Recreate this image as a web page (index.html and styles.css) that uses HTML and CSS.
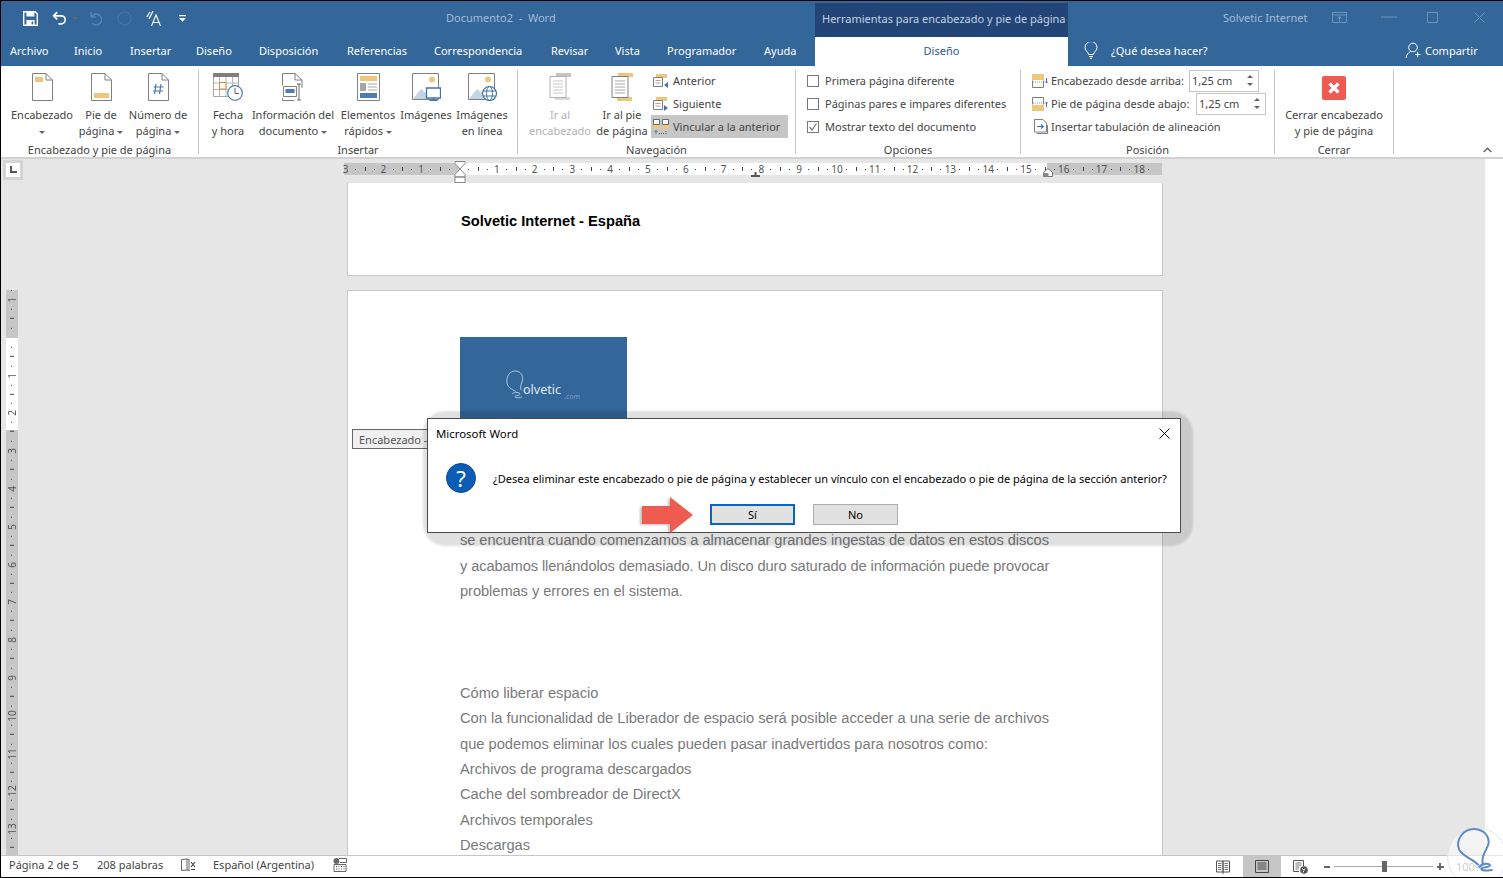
FILE: index.html
```html
<!DOCTYPE html>
<html lang="es">
<head>
  <meta charset="UTF-8" />
  <meta name="viewport" content="width=device-width, initial-scale=1.0"/>
  <title>Documento2 - Word</title>
  <link rel="stylesheet" href="styles.css">
</head>
<body>

<div class="app">

  <!-- title bar -->
  <header class="titlebar">
    <div class="qat">
      <svg class="qat-save" width="15" height="15" viewBox="0 0 15 15"><path d="M.7.7h11.4l2.2 2.2v11.4H.7z" fill="none" stroke="#fff" stroke-width="1.4"/><path d="M3.4 1h8v4.4h-8zM3.4 9h8.2v5.4H3.4z" fill="#fff"/><path d="M8.6 10.4h1.6v3H8.6z" fill="#336699"/></svg>
      <svg class="qat-undo" width="15" height="15" viewBox="0 0 15 15"><path d="M5.2 1.2 1.6 4.8l3.6 3.6M2 4.8h7.2a4 4 0 0 1 0 8H6.4" fill="none" stroke="#fff" stroke-width="1.7"/></svg>
      <span class="caret qat-caret"></span>
      <svg class="qat-redo" width="15" height="15" viewBox="0 0 15 15"><path d="M3.2 1v5h5M3.6 5.8a5.4 5.4 0 1 1 .6 6.4" fill="none" stroke="#5a84b0" stroke-width="1.5"/></svg>
      <svg class="qat-round" width="15" height="15" viewBox="0 0 15 15"><circle cx="7.5" cy="7.5" r="6.6" fill="none" stroke="#4d7aa8" stroke-width="1"/></svg>
      <svg class="qat-touch" width="16" height="17" viewBox="0 0 16 17"><path d="M4 2 .8 7M7 1 3 9" stroke="#fff" stroke-width="1.3"/><path d="M5.5 16 10 5l4.500 11M7.300 12.500h5.400" fill="none" stroke="#fff" stroke-width="1.1"/></svg>
      <svg class="qat-more" width="7" height="7" viewBox="0 0 7 7"><path d="M0 0h7v1.200H0zM0 3h7L3.500 6.800z" fill="#fff"/></svg>
    </div>
    <div class="doc-title">Documento2 &nbsp;-&nbsp; Word</div>
    <div class="ctx-title">Herramientas para encabezado y pie de página</div>
    <div class="account">Solvetic Internet</div>
    <svg class="win-display" width="15" height="11" viewBox="0 0 15 11"><path d="M.5.500h14v10H.5zM.5 3h14M7.500 9.500V4.500M5.500 6.500l2-2 2 2" fill="none" stroke="#6f94ba"/></svg>
    <svg class="win-min" width="16" height="2" viewBox="0 0 16 2"><path d="M0 1h16" stroke="#6f94ba"/></svg>
    <svg class="win-max" width="11" height="11" viewBox="0 0 11 11"><path d="M.5.500h10v10H.5z" fill="none" stroke="#6f94ba"/></svg>
    <svg class="win-close" width="11" height="11" viewBox="0 0 11 11"><path d="M.5.500l10 10M10.500.500l-10 10" stroke="#6f94ba"/></svg>
  </header>

  <!-- tabs -->
  <nav class="tabs">
    <a>Archivo</a>
    <a>Inicio</a>
    <a>Insertar</a>
    <a>Diseño</a>
    <a>Disposición</a>
    <a>Referencias</a>
    <a>Correspondencia</a>
    <a>Revisar</a>
    <a>Vista</a>
    <a>Programador</a>
    <a>Ayuda</a>
    <a class="tab-active">Diseño</a>
    <div class="tell-me">
      <svg width="14" height="17" viewBox="0 0 14 17"><path d="M4.500 12.500C4.500 10 1 9 1 5.500a6 6 0 0 1 12 0c0 3.500-3.500 4.500-3.500 7zM5 14.500h4M6 16.300h2" fill="none" stroke="#fff"/></svg>
      <span>¿Qué desea hacer?</span>
    </div>
    <div class="share">
      <svg width="16" height="17" viewBox="0 0 16 17"><circle cx="8" cy="5.500" r="4.300" fill="none" stroke="#fff"/><path d="M1 16c.5-3.500 2.500-5.500 4.500-6.500M10 12.500h5.500M12.700 9.800v5.400" fill="none" stroke="#fff"/></svg>
      <span>Compartir</span>
    </div>
  </nav>

  <!-- ribbon -->
  <section class="ribbon">

    <div class="group g-header">
      <div class="group-body">
        <div class="big w74">
          <div class="big-icon"><svg width="21" height="28" viewBox="0 0 21 28"><path d="M.5.500H14L20.500 7v20.500H.5z" fill="#fff" stroke="#808080"/><path d="M14 .5V7h6.500" fill="none" stroke="#808080"/><path d="M3 4h8v5H3z" fill="#edc77e"/></svg></div>
          <span>Encabezado<br><i class="caret"></i></span>
        </div>
        <div class="big w44">
          <div class="big-icon"><svg width="21" height="28" viewBox="0 0 21 28"><path d="M.5.500H14L20.500 7v20.500H.5z" fill="#fff" stroke="#808080"/><path d="M14 .5V7h6.500" fill="none" stroke="#808080"/><path d="M3 20h15v5H3z" fill="#edc77e"/></svg></div>
          <span>Pie de<br>página <i class="caret"></i></span>
        </div>
        <div class="big w70">
          <div class="big-icon"><svg width="21" height="28" viewBox="0 0 21 28"><path d="M.5.500H14L20.500 7v20.500H.5z" fill="#fff" stroke="#808080"/><path d="M14 .5V7h6.500" fill="none" stroke="#808080"/><path d="M8 11 6.500 21M13 11l-1.500 10M5.500 14h10M5 18h10" fill="none" stroke="#4a76b4" stroke-width="1.200"/></svg></div>
          <span>Número de<br>página <i class="caret"></i></span>
        </div>
      </div>
      <div class="group-label">Encabezado y pie de página</div>
    </div>

    <div class="group g-insert">
      <div class="group-body">
        <div class="big w38">
          <div class="big-icon"><svg width="30" height="28" viewBox="0 0 30 28"><path d="M.5.500h25v23H.5z" fill="#fff" stroke="#a6a6a6"/><path d="M0 0h26v4H0z" fill="#7f7f7f"/><path d="M6.500 4v19M13 4v19M19.500 4v19M1 10h24M1 16.500h24" stroke="#b5b5b5"/><path d="M6.500 9.500h6.500v6.500H6.500z" fill="#fff" stroke="#d08a3c"/><circle cx="22" cy="20" r="7.300" fill="#fff" stroke="#4a7ebb" stroke-width="1.200"/><path d="M22 15v5.500h4" fill="none" stroke="#666"/></svg></div>
          <span>Fecha<br>y hora</span>
        </div>
        <div class="big w92">
          <div class="big-icon"><svg width="22" height="28" viewBox="0 0 22 28"><path d="M.5.500H13L20 7v8M.5.500v12M.5 25v2.500H12" fill="none" stroke="#808080"/><path d="M13 .5V7h7" fill="none" stroke="#808080"/><path d="M1.500 13.500h13v10h-13z" fill="#fff" stroke="#808080"/><path d="M3.500 16h9v4h-9z" fill="#4f7ab5"/><path d="M15 11h4M17 11v16M15 27h4" fill="none" stroke="#666"/></svg></div>
          <span>Información del<br>documento <i class="caret"></i></span>
        </div>
        <div class="big w58">
          <div class="big-icon"><svg width="23" height="28" viewBox="0 0 23 28"><path d="M.5.500h22v27H.5z" fill="#fff" stroke="#808080"/><path d="M3 3h17v5H3z" fill="#edc77e"/><path d="M3 10h6v8H3z" fill="#a6a6a6"/><path d="M11 11h9M11 14h9M11 17h9" stroke="#a6a6a6"/><path d="M3 20h17v5H3z" fill="#4f7ab5"/></svg></div>
          <span>Elementos<br>rápidos <i class="caret"></i></span>
        </div>
        <div class="big w58">
          <div class="big-icon"><svg width="29" height="28" viewBox="0 0 29 28"><path d="M.5.500h26v26H.5z" fill="#fff" stroke="#808080"/><circle cx="20" cy="6.500" r="3" fill="#edc77e"/><path d="M1 26l8-10 5 4 3-2v8z" fill="#c3d3e8"/><path d="M14.500 15h14v10h-14z" fill="#fff" stroke="#3f73b0" stroke-width="1.300"/><path d="M21.500 25v2.500M17.500 27.500h8" stroke="#3f73b0" stroke-width="1.300"/></svg></div>
          <span>Imágenes<br>&nbsp;</span>
        </div>
        <div class="big w54">
          <div class="big-icon"><svg width="29" height="28" viewBox="0 0 29 28"><path d="M.5.500h26v26H.5z" fill="#fff" stroke="#808080"/><circle cx="20" cy="6.500" r="3" fill="#edc77e"/><path d="M1 26l8-10 5 4 3-2v8z" fill="#c3d3e8"/><circle cx="21.500" cy="20.500" r="7" fill="#fff" stroke="#3f73b0" stroke-width="1.200"/><ellipse cx="21.500" cy="20.500" rx="3" ry="7" fill="none" stroke="#3f73b0"/><path d="M15 18h13M15 23h13" stroke="#3f73b0"/></svg></div>
          <span>Imágenes<br>en línea</span>
        </div>
      </div>
      <div class="group-label">Insertar</div>
    </div>

    <div class="group g-nav">
      <div class="group-body">
        <div class="big w68 big-off">
          <div class="big-icon"><svg width="23" height="28" viewBox="0 0 23 28"><path d="M7 0h15v4H7z" fill="#c4c4c4"/><path d="M6 24h15v3H6z" fill="#d9d9d9"/><path d="M1 3.500h16v21H1z" fill="#fff" stroke="#b0b0b0"/><path d="M4 8h10M4 11h10M4 14h10M4 17h10M4 20h10" stroke="#c8c8c8"/></svg></div>
          <span>Ir al<br>encabezado</span>
        </div>
        <div class="big w56">
          <div class="big-icon"><svg width="23" height="28" viewBox="0 0 23 28"><path d="M7 0h15v4H7z" fill="#edc77e"/><path d="M6 24h15v4H6z" fill="#edc77e"/><path d="M1 3.500h16v21H1z" fill="#fff" stroke="#808080"/><path d="M4 8h10M4 11h10M4 14h10M4 17h10M4 20h10" stroke="#a6a6a6"/></svg></div>
          <span>Ir al pie<br>de página</span>
        </div>
        <div class="small-col">
          <div class="small-row">
            <svg width="16" height="16" viewBox="0 0 16 16"><path d="M3 1h11v4H3z" fill="#edc77e"/><path d="M.5 4.500h9v9h-9z" fill="#fff" stroke="#808080"/><path d="M2.500 7.500h5M2.500 10h5" stroke="#a6a6a6"/><path d="M15 9v6l-4-3z" fill="#3f73b0"/></svg>
            <span>Anterior</span>
          </div>
          <div class="small-row">
            <svg width="16" height="16" viewBox="0 0 16 16"><path d="M3 1h11v4H3z" fill="#edc77e"/><path d="M.5 4.500h9v9h-9z" fill="#fff" stroke="#808080"/><path d="M2.500 7.500h5M2.500 10h5" stroke="#a6a6a6"/><path d="M11 9v6l4-3z" fill="#3f73b0"/></svg>
            <span>Siguiente</span>
          </div>
          <div class="small-row small-row-on">
            <svg width="16" height="16" viewBox="0 0 16 16"><path d="M.5.500h6v5h-6zM9.500.500h6v5h-6z" fill="#fff" stroke="#666"/><path d="M0 6h7v4H0zM9 6h7v4H9z" fill="#edc77e"/><path d="M3 15v-3M1.500 13 3 11.500 4.500 13" fill="none" stroke="#3f73b0"/><path d="M6 14.500h1M8 14.500h1M10 14.500h1M13 12v1M13 14v1" stroke="#555"/></svg>
            <span>Vincular a la anterior</span>
          </div>
        </div>
      </div>
      <div class="group-label">Navegación</div>
    </div>

    <div class="group g-options">
      <div class="group-body group-rows">
        <div class="small-row"><i class="check"></i><span>Primera página diferente</span></div>
        <div class="small-row"><i class="check"></i><span>Páginas pares e impares diferentes</span></div>
        <div class="small-row">
          <i class="check"><svg width="12" height="12" viewBox="0 0 12 12"><path d="M2.500 6 5 9l4.500-6.500" fill="none" stroke="#777" stroke-width="1.200"/></svg></i>
          <span>Mostrar texto del documento</span>
        </div>
      </div>
      <div class="group-label">Opciones</div>
    </div>

    <div class="group g-position">
      <div class="group-body group-rows">
        <div class="small-row">
          <svg width="16" height="16" viewBox="0 0 16 16"><path d="M0 1h12v6H0z" fill="#edc77e"/><path d="M.5 7.500v7h11v-7" fill="none" stroke="#808080"/><path d="M1 9h10" stroke="#999" stroke-dasharray="1 1"/><path d="M14.500 5v5M13 8.500l1.500 1.500L16 8.500" fill="none" stroke="#3f73b0"/></svg>
          <span class="pos-label-a">Encabezado desde arriba:</span>
          <div class="spin"><span>1,25 cm</span><em><b class="up"></b><b class="down"></b></em></div>
        </div>
        <div class="small-row">
          <svg width="16" height="16" viewBox="0 0 16 16"><path d="M.5 8.500v-7h11v7" fill="none" stroke="#808080"/><path d="M0 9h12v6H0z" fill="#edc77e"/><path d="M1 7h10" stroke="#999" stroke-dasharray="1 1"/><path d="M14.500 11V6M13 7.500 14.500 6 16 7.500" fill="none" stroke="#3f73b0"/></svg>
          <span class="pos-label-b">Pie de página desde abajo:</span>
          <div class="spin"><span>1,25 cm</span><em><b class="up"></b><b class="down"></b></em></div>
        </div>
        <div class="small-row">
          <svg class="tab-icon" width="14" height="15" viewBox="0 0 14 15"><path d="M.5.500H9L12.500 4v9H.5z" fill="#fff" stroke="#808080"/><path d="M2.500 14.500h11V6" fill="none" stroke="#808080"/><path d="M3 7.500h6M7 5.500l2.300 2-2.300 2" fill="none" stroke="#3f73b0" stroke-width="1.200"/></svg>
          <span>Insertar tabulación de alineación</span>
        </div>
      </div>
      <div class="group-label">Posición</div>
    </div>

    <div class="group g-close">
      <div class="group-body">
        <div class="big w118">
          <div class="big-icon"><svg width="24" height="24" viewBox="0 0 24 24"><rect width="24" height="24" rx="2" fill="#ef5b50"/><path d="M7.500 7.500l9 9M16.500 7.500l-9 9" stroke="#fff" stroke-width="3.200"/></svg></div>
          <span>Cerrar encabezado<br>y pie de página</span>
        </div>
      </div>
      <div class="group-label">Cerrar</div>
    </div>

    <svg class="collapse" width="9" height="6" viewBox="0 0 9 6"><path d="M.7 5 4.500 1.200 8.300 5" fill="none" stroke="#666" stroke-width="1.500"/></svg>
  </section>

  <!-- horizontal ruler -->
  <div class="ruler-row">
    <div class="tab-select"><svg width="8" height="8" viewBox="0 0 8 8"><path d="M1 0h2v5h5v2H1z" fill="#555"/></svg></div>
    <div class="hruler">
      <span>3</span><span>2</span><span>1</span><span></span><span>1</span><span>2</span><span>3</span><span>4</span><span>5</span><span>6</span><span>7</span><span>8</span><span>9</span><span>10</span><span>11</span><span>12</span><span>13</span><span>14</span><span>15</span><span>16</span><span>17</span><span>18</span>
      <svg class="mark-indent" width="12" height="22" viewBox="0 0 12 22"><path d="M1 .5h10v2L6 8 1 2.500zM6 8l5 5.500v2.500H1v-2.500zM1 16h10v5.500H1z" fill="#fff" stroke="#888"/></svg>
      <svg class="mark-center" width="9" height="6" viewBox="0 0 9 6"><path d="M3.500 0h2v3h3.500v2H0V3h3.500z" fill="#555"/></svg>
      <svg class="mark-right" width="10" height="9" viewBox="0 0 10 9"><path d="M5 .5l4.500 4v4H.5v-4z" fill="#fff" stroke="#777"/><path d="M.5 5h5v3.500h-5z" fill="#888"/></svg>
    </div>
  </div>

  <!-- document area -->
  <main class="workspace">
    <div class="side">
      <div class="vruler">
        <span>1</span><span></span><span>1</span><span>2</span><span>3</span><span>4</span><span>5</span><span>6</span><span>7</span><span>8</span><span>9</span><span>10</span><span>11</span><span>12</span><span>13</span><span></span>
      </div>
    </div>

    <div class="pages">
      <div class="page-head">
        <strong>Solvetic Internet - España</strong>
      </div>
      <div class="page-body">
        <div class="logo">
          <svg width="80" height="40" viewBox="0 0 80 40"><path d="M13 30c-3-4-9-4-10-10C2 13 6 8 11 8c6 0 9 5 7 11-1 3-2 5-1 8M8 31c2-2 8-2 8 0 0 2-6 1-5 3 1 1 5 1 7 0" fill="none" stroke="#aec4dd" stroke-width="1"/><text x="19" y="31" class="logo-name">olvetic</text><text x="60" y="36" class="logo-com">.com</text></svg>
        </div>
        <div class="tag">Encabezado -</div>
        <div class="doc-text">
          <p class="tight-a">se encuentra cuando comenzamos a almacenar grandes ingestas de datos en estos discos</p>
          <p class="tight-b">y acabamos llenándolos demasiado. Un disco duro saturado de información puede provocar</p>
          <p class="tight-a">problemas y errores en el sistema.</p>
          <p>&nbsp;</p>
          <p>&nbsp;</p>
          <p>&nbsp;</p>
          <p>Cómo liberar espacio</p>
          <p>Con la funcionalidad de Liberador de espacio será posible acceder a una serie de archivos</p>
          <p>que podemos eliminar los cuales pueden pasar inadvertidos para nosotros como:</p>
          <p>Archivos de programa descargados</p>
          <p>Cache del sombreador de DirectX</p>
          <p>Archivos temporales</p>
          <p>Descargas</p>
        </div>
      </div>
    </div>
  </main>

  <!-- status bar -->
  <footer class="statusbar">
    <span>Página 2 de 5</span>
    <span>208 palabras</span>
    <svg width="15" height="14" viewBox="0 0 15 14"><path d="M.5 1.500 6 1v11l-5.500.5zM6 1l2 .5M6 12l2 .5M8 1v12" fill="none" stroke="#666"/><path d="M10 4l4 5M14 4l-4 5M10 11.500h4" stroke="#444" stroke-width="1.200"/></svg>
    <span>Español (Argentina)</span>
    <svg width="14" height="14" viewBox="0 0 14 14"><circle cx="3.500" cy="3" r="3" fill="#666"/><path d="M1 6.500h12v7H1zM6 .5h7.500v4H7" fill="#fff" stroke="#666"/><path d="M3 8.500h1M5.500 8.500h1M8 8.500h1M10.500 8.500h1M3 11h1M5.500 11h1M8 11h1M10.500 11h1" stroke="#444"/></svg>

    <div class="view-tools">
      <svg class="view-read" width="14" height="14" viewBox="0 0 14 14"><path d="M.5 1H7v11H.5zM7 1h6.500v11H7zM7 12v2" fill="none" stroke="#555"/><path d="M2 3.500h3.500M2 5.500h3.500M2 7.500h3.500M2 9.500h3.500M8.500 3.500H12M8.500 5.500H12M8.500 7.500H12M8.500 9.500H12" stroke="#777"/></svg>
      <div class="view-print"><svg width="14" height="13" viewBox="0 0 14 13"><path d="M.5.500h13v12H.5z" fill="none" stroke="#444"/><path d="M2.500 3h9M2.500 5h9M2.500 7h9M2.500 9h9" stroke="#444"/></svg></div>
      <svg class="view-web" width="15" height="14" viewBox="0 0 15 14"><path d="M.5.500h10V6M.5.500v11H6" fill="none" stroke="#555"/><path d="M2.500 3h6M2.500 5h6M2.500 7h4M2.500 9h3" stroke="#777"/><circle cx="11" cy="10" r="3.800" fill="#555"/><path d="M9 8.500l2 1.500 1-1.500M10 12.500l1-2" stroke="#fff"/></svg>
      <span class="zoom-minus"></span>
      <div class="slider"><i></i></div>
      <span class="zoom-plus"></span>
      <span class="zoom-value">100%</span>
    </div>
  </footer>

  <!-- dialog -->
  <div class="dialog">
    <div class="dialog-title">
      <span>Microsoft Word</span>
      <svg width="11" height="11" viewBox="0 0 11 11"><path d="M.5.500l10 10M10.500.500l-10 10" stroke="#111"/></svg>
    </div>
    <div class="dialog-msg">
      <div class="q-icon">?</div>
      <p>¿Desea eliminar este encabezado o pie de página y establecer un vínculo con el encabezado o pie de página de la sección anterior?</p>
    </div>
    <div class="dialog-btns">
      <button class="btn-default">Sí</button>
      <button>No</button>
    </div>
  </div>

  <svg class="arrow" width="54" height="38" viewBox="0 0 54 38"><path d="M0 9h28V0l23 18-23 18v-9H0z" fill="#ef5b50"/></svg>

  <svg class="watermark" width="63" height="58" viewBox="0 0 189 174"><circle cx="111" cy="111" r="88" fill="#fff" fill-opacity=".5" stroke="#e4e4e4" stroke-width="3"/><path d="M116 135C95 115 70 110 58 90 45 60 70 25 105 27c35 3 50 33 35 58-10 20-15 30-12 45M116 142c14-15 34-12 34-6 0 7-30 5-25 12 5 7 25 2 33 2" fill="none" stroke="#5f8bc4" stroke-width="6"/></svg>
</div>

</body>
</html>
```

FILE: styles.css
```css
* {
  box-sizing: border-box;
}
body {
  margin: 0;
  font-family: 'Noto Sans', 'Open Sans', sans-serif;
  font-size: 11px;
  color: #444;
}
svg {
  display: block;
  flex: none;
}
.app {
  position: relative;
  width: 1503px;
  height: 878px;
  display: flex;
  flex-direction: column;
  border-top: 1px solid #000;
  border-left: 1px solid #000;
  border-bottom: 1px solid #000;
  overflow: hidden;
  background: #fff;
}

/* title bar */
.titlebar {
  height: 36px;
  background: #336699;
  display: flex;
  align-items: center;
  flex: none;
}
.qat {
  width: 445px;
  display: flex;
  align-items: center;
  margin-top: -2px;
}
.qat-save { margin-left: 22px; }
.qat-undo { margin-left: 14px; }
.qat-caret { margin-left: 5px; border-top-color: #fff; }
.qat-redo { margin-left: 10px; }
.qat-round { margin-left: 14px; }
.qat-touch { margin-left: 14px; }
.qat-more { margin-left: 17px; }
.caret, i.caret {
  display: inline-block;
  width: 0;
  height: 0;
  border: 3px solid transparent;
  border-top: 3px solid #666;
  border-bottom: 0;
  vertical-align: middle;
}
.doc-title {
  width: 369px;
  margin-top: -4px;
  color: #a5bcd6;
  white-space: nowrap;
}
.ctx-title {
  width: 253px;
  height: 34px;
  margin-top: 1px;
  padding-left: 7px;
  background: #224477;
  color: #c3d1e3;
  line-height: 32px;
  white-space: nowrap;
}
.account {
  width: 110px;
  margin-left: 155px;
  margin-top: -4px;
  color: #a5bcd6;
  white-space: nowrap;
}
.win-display { margin-left: -1px; margin-top: -4px; }
.win-min { margin-left: 34px; margin-top: -4px; }
.win-max { margin-left: 30px; margin-top: -4px; }
.win-close { margin-left: 36px; margin-top: -4px; }

/* tabs */
.tabs {
  height: 29px;
  flex: none;
  background: #336699;
  padding: 0 0 2px 9px;
  display: grid;
  grid-template-columns: 64px 56px 66px 63px 88px 87px 117px 64px 52px 97px 51px 253px 336px 1fr;
  align-items: center;
  color: #fff;
  white-space: nowrap;
}
.tab-active {
  height: 29px;
  margin-bottom: -2px;
  align-self: start;
  background: #fff;
  color: #2b5797;
  text-align: center;
  line-height: 27px;
}
.tell-me, .share {
  display: flex;
  align-items: center;
}
.tell-me { padding-left: 16px; gap: 13px; }
.share { gap: 4px; margin-left: 1px; }

/* ribbon */
.ribbon {
  height: 93px;
  flex: none;
  position: relative;
  display: flex;
  padding-top: 4px;
  background: #fff;
  border-bottom: 2px solid #d2d2d2;
}
.group {
  height: 84px;
  border-right: 1px solid #c6c6c6;
  display: flex;
  flex-direction: column;
}
.g-header { width: 198px; }
.g-insert { width: 319px; }
.g-nav { width: 278px; }
.g-options { width: 225px; }
.g-position { width: 254px; }
.g-close { width: 119px; }
.group-body {
  height: 72px;
  display: flex;
  white-space: nowrap;
}
.g-header .group-body { padding-left: 4px; }
.g-insert .group-body { padding-left: 10px; }
.g-nav .group-body { padding-left: 8px; }
.g-options .group-body { padding-left: 11px; }
.g-position .group-body { padding-left: 11px; }
.group-rows {
  flex-direction: column;
}
.group-rows .small-row:first-child { margin-top: -1px; }
.group-label {
  height: 16px;
  margin-bottom: -4px;
  line-height: 16px;
  text-align: center;
  white-space: nowrap;
}
.big {
  text-align: center;
  line-height: 16px;
  padding-top: 3px;
  display: flex;
  flex-direction: column;
  align-items: center;
}
.big-icon {
  height: 34px;
}
.big-off { color: #b1b1b1; }
.w38 { width: 38px; }
.w44 { width: 44px; }
.w54 { width: 54px; }
.w56 { width: 56px; }
.w58 { width: 58px; }
.w68 { width: 68px; }
.w70 { width: 70px; }
.w74 { width: 74px; }
.w92 { width: 92px; }
.w118 { width: 118px; }
.g-close .big-icon { padding-top: 3px; }
.small-col {
  width: 137px;
  margin: -1px 0 0 1px;
}
.small-row {
  height: 23px;
  display: flex;
  align-items: center;
  gap: 4px;
  padding-left: 2px;
}
.small-row-on { background: #c6c6c6; }
.g-options .small-row { padding-left: 0; gap: 6px; }
.g-position .small-row { padding-left: 0; gap: 3px; }
.tab-icon { margin-left: 2px; }
.check {
  width: 12px;
  height: 12px;
  border: 1px solid #777;
  display: block;
  flex: none;
  position: relative;
}
.check svg { margin: -1px; }
.pos-label-a { width: 135px; }
.pos-label-b { width: 142px; }
.spin {
  width: 70px;
  height: 22px;
  border: 1px solid #c6c6c6;
  padding-left: 2px;
  display: flex;
  align-items: center;
  justify-content: space-between;
  background: #fff;
}
.spin em {
  width: 16px;
  display: flex;
  flex-direction: column;
  align-items: center;
  gap: 5px;
}
.spin b {
  width: 0;
  height: 0;
  border: 3px solid transparent;
  border-top-width: 0;
  border-bottom-color: #666;
}
.spin b.down {
  border-top: 3px solid #666;
  border-bottom-width: 0;
}
.collapse {
  position: absolute;
  right: 11px;
  bottom: 4px;
}

/* rulers */
.ruler-row {
  height: 24px;
  flex: none;
  background: #e6e6e6;
  border-right: 18px solid #fff;
  display: flex;
  align-items: flex-start;
}
.tab-select {
  width: 20px;
  height: 20px;
  margin: 1px 0 0 2px;
  border: 3px solid #d4d4d4;
  background: #fff;
  display: flex;
  align-items: center;
  justify-content: center;
}
.hruler {
  position: relative;
  width: 818px;
  height: 12px;
  margin: 4px 0 0 321px;
  display: flex;
  background: linear-gradient(to right, #c6c6c6 115px, #fff 115px, #fff 703px, #c6c6c6 703px);
}
.hruler span {
  flex: none;
  width: 37.8px;
  height: 12px;
  line-height: 12px;
  font-size: 10px;
  text-align: center;
  color: #555;
  background:
    linear-gradient(#444, #444) 9px 6px / 1px 1px no-repeat,
    linear-gradient(#444, #444) 0 4px / 1px 4px no-repeat,
    linear-gradient(#444, #444) 28px 6px / 1px 1px no-repeat;
}
.hruler span:first-child {
  margin-left: -17.3px;
  background: linear-gradient(#444, #444) 28px 6px / 1px 1px no-repeat;
}
.mark-indent {
  position: absolute;
  left: 110px;
  top: -2px;
}
.mark-center {
  position: absolute;
  left: 407px;
  top: 9px;
}
.mark-right {
  position: absolute;
  left: 699px;
  top: 5px;
}

/* document */
.workspace {
  flex: 1;
  min-height: 0;
  display: flex;
  background: #e6e6e6;
  border-right: 18px solid #fff;
  overflow: hidden;
}
.side {
  width: 346px;
  flex: none;
  padding: 107px 0 0 5px;
}
.vruler {
  width: 12px;
  height: 100%;
  overflow: hidden;
  background: linear-gradient(to bottom, #c6c6c6 48px, #fff 48px, #fff 140px, #c6c6c6 140px);
}
.vruler span {
  display: block;
  width: 12px;
  height: 37.8px;
  writing-mode: vertical-rl;
  transform: rotate(180deg);
  line-height: 12px;
  font-size: 10px;
  text-align: center;
  color: #555;
  background:
    linear-gradient(#444, #444) 6px 9px / 1px 1px no-repeat,
    linear-gradient(#444, #444) 4px 0 / 4px 1px no-repeat,
    linear-gradient(#444, #444) 6px 28px / 1px 1px no-repeat;
}
.vruler span:first-child {
  margin-top: -9px;
}
.pages {
  width: 816px;
  flex: none;
}
.page-head {
  height: 93px;
  padding: 29px 0 0 113px;
  background: #fff;
  border: 1px solid #c8c8c8;
  border-top: 0;
  font-family: 'Liberation Sans', Arial, sans-serif;
  font-size: 14.67px;
  line-height: 18px;
  color: #000;
}
.page-body {
  position: relative;
  height: 700px;
  margin-top: 14px;
  padding: 46px 0 0 112px;
  background: #fff;
  border: 1px solid #c8c8c8;
}
.logo {
  width: 167px;
  height: 100px;
  padding: 26px 0 0 44px;
  background: #336699;
}
.logo-name {
  font-size: 12.5px;
  fill: #e1e9f2;
}
.logo-com {
  font-size: 7px;
  fill: #7f9fc4;
}
.tag {
  position: absolute;
  left: 4px;
  top: 138px;
  width: 90px;
  height: 20px;
  padding-left: 6px;
  line-height: 19px;
  background: #f0f0f0;
  border: 1px solid #666;
  color: #555;
  white-space: nowrap;
}
.doc-text {
  margin-top: 91.4px;
  font-family: 'Liberation Sans', Arial, sans-serif;
  font-size: 14.67px;
  line-height: 25.4px;
  color: #7a7a7a;
  white-space: nowrap;
}
.doc-text p {
  margin: 0;
}
.doc-text .tight-a {
  letter-spacing: -0.06px;
}
.doc-text .tight-b {
  letter-spacing: -0.11px;
}

/* status bar */
.statusbar {
  height: 22px;
  flex: none;
  padding: 0 0 4px 8px;
  display: grid;
  grid-template-columns: 88px 84px 32px 120px 1fr auto;
  align-items: center;
  background: #fff;
  border-top: 1px solid #c6c6c6;
  white-space: nowrap;
}
.view-tools {
  align-self: start;
  display: flex;
  align-items: center;
  height: 21px;
  margin-bottom: -4px;
  padding-right: 19px;
}
.view-print {
  width: 38px;
  height: 21px;
  margin: 0 12px 0 13px;
  background: #c6c6c6;
  display: flex;
  align-items: center;
  justify-content: center;
}
.zoom-minus {
  width: 6px;
  height: 2px;
  margin-left: 16px;
  background: #666;
}
.slider {
  position: relative;
  width: 99px;
  height: 1px;
  margin: 0 4px;
  background: #aaa;
}
.slider i {
  position: absolute;
  left: 48px;
  top: -5px;
  width: 5px;
  height: 11px;
  background: #666;
}
.zoom-plus {
  width: 7px;
  height: 7px;
  background:
    linear-gradient(#666, #666) center / 7px 2px no-repeat,
    linear-gradient(#666, #666) center / 2px 7px no-repeat;
}
.zoom-value {
  margin-left: 12px;
  color: #999;
}

/* dialog and overlays */
.dialog {
  position: absolute;
  left: 426px;
  top: 417px;
  width: 754px;
  height: 115px;
  background: #fff;
  border: 1px solid #555;
  color: #000;
  z-index: 2;
}
.dialog::before {
  content: "";
  position: absolute;
  inset: -8px -13px -14px -5px;
  border-radius: 22px;
  background: rgba(0, 0, 0, 0.12);
  filter: blur(1px);
  z-index: -2;
}
.dialog::after {
  content: "";
  position: absolute;
  inset: 0;
  background: #fff;
  z-index: -1;
}
.dialog-title {
  height: 28px;
  padding: 0 10px 0 8px;
  font-size: 11.4px;
  display: flex;
  align-items: center;
  justify-content: space-between;
}
.dialog-msg {
  height: 48px;
  margin-top: 7px;
  padding-left: 18px;
  display: flex;
  align-items: center;
  gap: 17px;
}
.dialog-msg p {
  margin: 0;
  white-space: nowrap;
}
.q-icon {
  width: 30px;
  height: 30px;
  flex: none;
  border-radius: 50%;
  background: #0a5cb4;
  border: 1px solid #084a94;
  color: #fff;
  font-size: 22px;
  line-height: 28px;
  text-align: center;
}
.dialog-btns {
  padding-left: 282px;
  display: flex;
  gap: 18px;
  margin-top: 2px;
}
.dialog-btns button {
  width: 85px;
  height: 21px;
  padding: 0;
  font: inherit;
  color: #000;
  background: #e1e1e1;
  border: 1px solid #adadad;
}
.dialog-btns .btn-default {
  border: 2px solid #0a64c0;
}
.arrow {
  position: absolute;
  left: 641px;
  top: 496px;
  z-index: 3;
  filter: drop-shadow(-2px 1px 1px rgba(0, 0, 0, 0.25));
}
.watermark {
  position: absolute;
  left: 1439px;
  top: 819px;
  z-index: 3;
}
```
